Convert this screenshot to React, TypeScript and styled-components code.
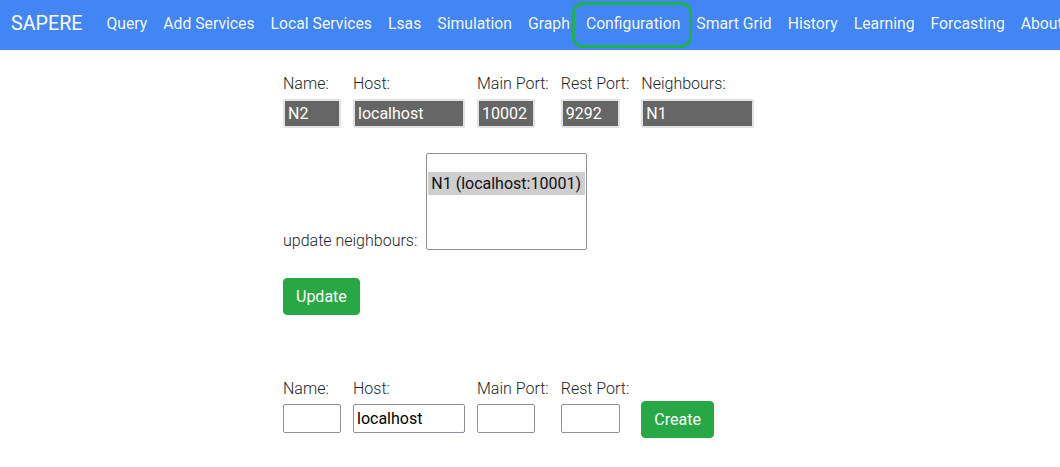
import { createGlobalStyle, styled } from 'styled-components'

const GlobalStyle = createGlobalStyle`
  html, body {
    margin: 0;
    padding: 0;
    background: #ffffff;
    font-family: Roboto, 'Liberation Sans', sans-serif;
    color: #212529;
  }
  * {
    box-sizing: border-box;
  }
`

const navItems = [
  'Query',
  'Add Services',
  'Local Services',
  'Lsas',
  'Simulation',
  'Graph',
  'Configuration',
  'Smart Grid',
  'History',
  'Learning',
  'Forcasting',
  'About',
]

const App = () => {
  return (
    <>
      <GlobalStyle />
      <NavBar>
        <Brand>SAPERE</Brand>
        {navItems.map((item) => (
          <NavLink key={item} $marked={item === 'Configuration'}>
            {item}
          </NavLink>
        ))}
      </NavBar>

      <Content>
        <FieldRow>
          <Field>
            <Label>Name:</Label>
            <StyledInput $w={58} $disabled value="N2" readOnly />
          </Field>
          <Field>
            <Label>Host:</Label>
            <StyledInput $w={112} $disabled value="localhost" readOnly />
          </Field>
          <Field>
            <Label>Main Port:</Label>
            <StyledInput $w={58} $disabled value="10002" readOnly />
          </Field>
          <Field>
            <Label>Rest Port:</Label>
            <StyledInput $w={59} $disabled value="9292" readOnly />
          </Field>
          <Field>
            <Label>Neighbours:</Label>
            <StyledInput $w={113} $disabled value="N1" readOnly />
          </Field>
        </FieldRow>

        <SelectRow>
          <Label>update neighbours:</Label>
          <ListBox>
            <ListOption $selected>N1 (localhost:10001)</ListOption>
          </ListBox>
        </SelectRow>

        <ActionButton>Update</ActionButton>

        <FieldRow $top={64}>
          <Field>
            <Label>Name:</Label>
            <StyledInput $w={58} />
          </Field>
          <Field>
            <Label>Host:</Label>
            <StyledInput $w={112} defaultValue="localhost" />
          </Field>
          <Field>
            <Label>Main Port:</Label>
            <StyledInput $w={58} />
          </Field>
          <Field>
            <Label>Rest Port:</Label>
            <StyledInput $w={59} />
          </Field>
          <CreateButton>Create</CreateButton>
        </FieldRow>
      </Content>
    </>
  )
}
export default App

const NavBar = styled.nav`
  display: flex;
  align-items: flex-start;
  height: 50px;
  padding: 1px 11px 0;
  background-color: #4285f4;
  white-space: nowrap;
  overflow: hidden;
`

const Brand = styled.span`
  font-size: 19.7px;
  color: #ffffff;
  margin-right: 16px;
  line-height: 46px;
`

const NavLink = styled.a<{ $marked?: boolean }>`
  position: relative;
  padding: 0 8px;
  font-size: 15.75px;
  line-height: 46px;
  color: rgba(255, 255, 255, 0.95);
  cursor: pointer;

  &::after {
    content: '';
    display: ${(p) => (p.$marked ? 'block' : 'none')};
    position: absolute;
    top: 1px;
    bottom: -1px;
    left: -6px;
    right: -4px;
    border: 3px solid #1fb14b;
    border-radius: 11px;
  }
`

const Content = styled.main`
  display: flex;
  flex-direction: column;
  align-items: flex-start;
  padding: 24px 0 24px 283px;
`

const FieldRow = styled.div<{ $top?: number }>`
  display: flex;
  align-items: flex-end;
  gap: 12px;
  margin-top: ${(p) => p.$top || 0}px;
`

const Field = styled.div`
  display: flex;
  flex-direction: column;
  gap: 6px;
`

const Label = styled.label`
  font-size: 16px;
  font-weight: 300;
  line-height: 19px;
  color: #212529;
`

const StyledInput = styled.input<{ $w: number; $disabled?: boolean }>`
  width: ${(p) => p.$w}px;
  height: 29px;
  padding: 0 3px;
  font-family: Roboto, 'Liberation Sans', sans-serif;
  font-size: 16px;
  border-radius: 2px;
  outline: none;
  color: ${(p) => (p.$disabled ? '#ffffff' : '#000000')};
  background: ${(p) => (p.$disabled ? '#666666' : '#ffffff')};
  border: ${(p) => (p.$disabled ? '2px solid #e2e2e2' : '1px solid #8f8f9d')};
`

const SelectRow = styled.div`
  display: flex;
  align-items: flex-end;
  gap: 9px;
  margin-top: 25px;
`

const ListBox = styled.div`
  width: 161px;
  height: 97px;
  border: 1px solid #8f8f9d;
  border-radius: 2px;
  padding: 18px 1px 0;
  background: #ffffff;
`

const ListOption = styled.div<{ $selected?: boolean }>`
  height: 23px;
  padding: 0 3px;
  font-size: 16px;
  line-height: 23px;
  white-space: nowrap;
  color: #111111;
  background: ${(p) => (p.$selected ? '#cecece' : 'transparent')};
`

const ActionButton = styled.button`
  margin-top: 28px;
  height: 37px;
  padding: 0 12px;
  font-family: Roboto, 'Liberation Sans', sans-serif;
  font-size: 16px;
  color: #ffffff;
  background-color: #28a745;
  border: 1px solid #28a745;
  border-radius: 4px;
  cursor: pointer;
`

const CreateButton = styled(ActionButton)`
  margin-top: 0;
  margin-bottom: -5px;
`
